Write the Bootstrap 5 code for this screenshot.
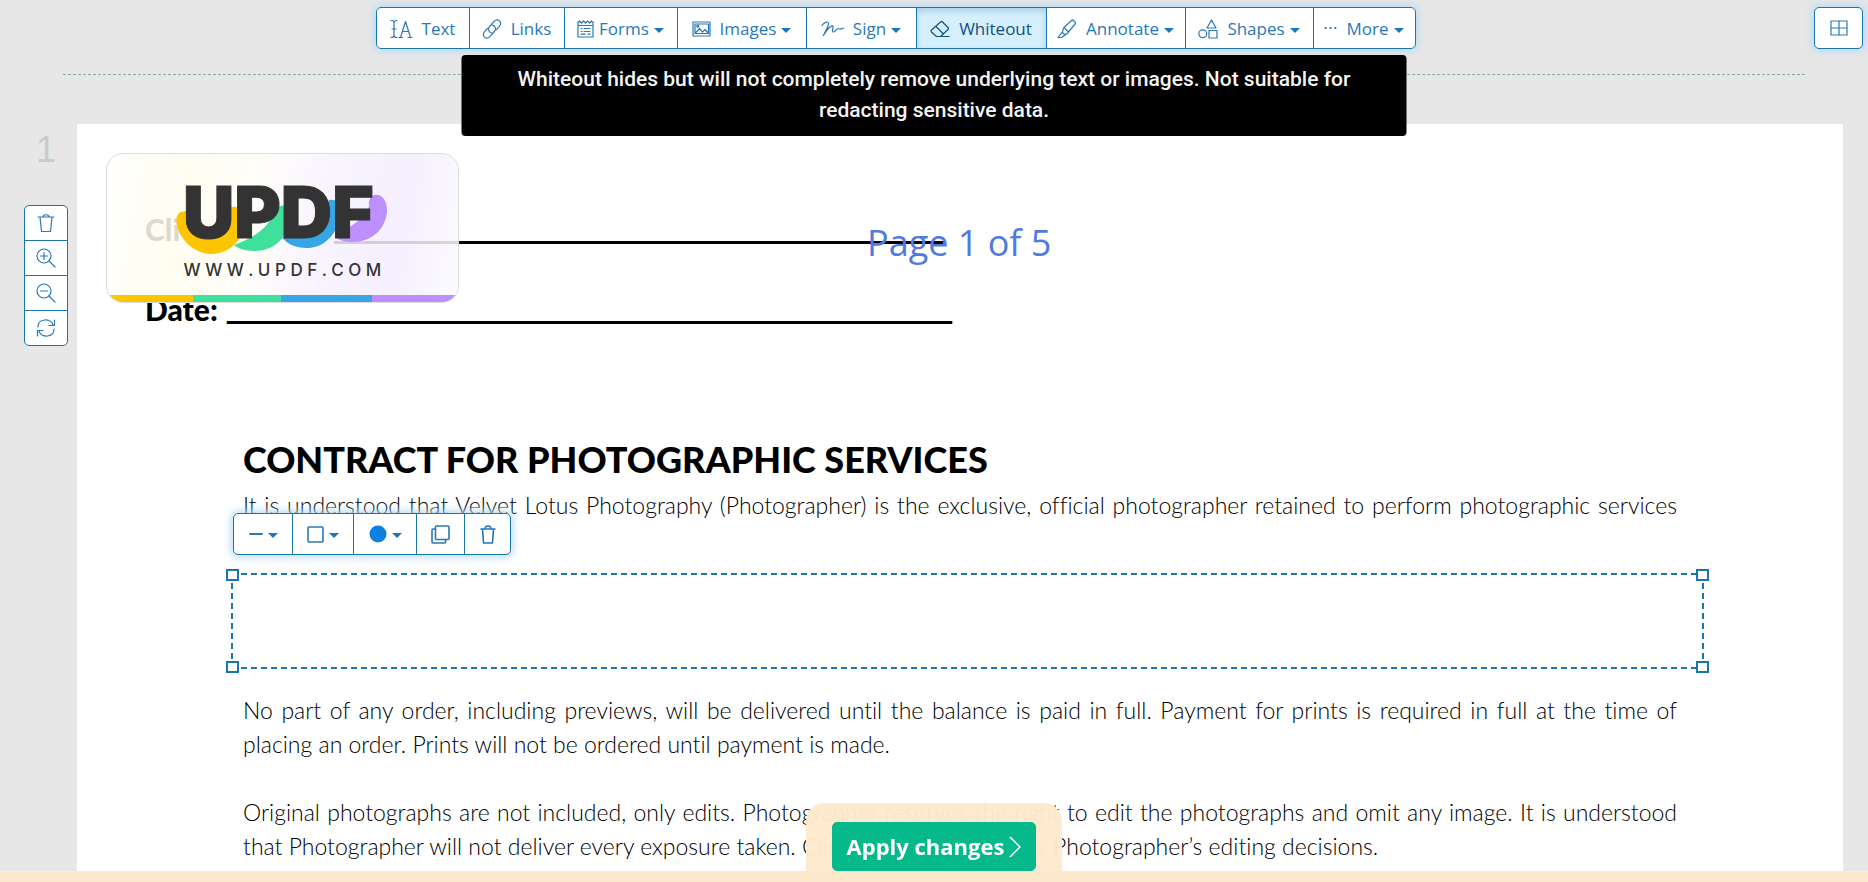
<!DOCTYPE html>
<html lang="en">
<head>
<meta charset="utf-8">
<meta name="viewport" content="width=device-width, initial-scale=1">
<title>Whiteout – PDF editor</title>
<link href="https://cdn.jsdelivr.net/npm/bootstrap@5.3.0/dist/css/bootstrap.min.css" rel="stylesheet">
<style>
:root { --line: #1a75a8; --tool: #2a78b8; }
body { background: #e7e7e7; font-family: "Open Sans", sans-serif; overflow: hidden; }
.tool-btn {
  --bs-btn-color: var(--tool); --bs-btn-bg: #fff; --bs-btn-border-color: var(--line);
  --bs-btn-hover-color: #14507c; --bs-btn-hover-bg: #dff2fc; --bs-btn-hover-border-color: var(--line);
  --bs-btn-active-color: #14507c; --bs-btn-active-bg: #d5effc; --bs-btn-active-border-color: var(--line);
  --bs-btn-padding-x: 0; --bs-btn-padding-y: 0; --bs-btn-font-size: 17px; --bs-btn-border-radius: 5px;
  display: flex; align-items: center; justify-content: center; gap: 9px; white-space: nowrap;
}
.tool-btn svg { flex: none; fill: none; stroke: currentColor; stroke-width: 1.2; stroke-linejoin: round; stroke-linecap: round; }
.tool-btn.active { box-shadow: inset 0 3px 6px #a9cfe4; }
.caret::after { content: ""; border: 5px solid transparent; border-top-color: #1878bd; border-bottom: 0; margin: 3px 0 0 -4px; }
.tight-icon svg { margin-right: -4px; }
.glow { box-shadow: 0 0 8px 2px #b5daf3; border-radius: 5px; }
.top-area { height: 124px; padding-top: 7px; }
.main-tools { display: grid; grid-template-columns: 94px 95px 113px 129px 110px 130px 139px 128px 102px; height: 42px; }
.main-tools .tool-btn { padding-top: 1px; }
.side-slot { width: 77px; padding-right: 5px; }
.view-btn { width: 49px; height: 42px; }
.insert-line { margin: 25px 63px 0; border-top: 1px dashed #86acb0; }
.tip-box {
  top: 55px; left: 50%; transform: translateX(-50%); width: 945px; padding: 9px 48px 10px;
  background: #000; color: #f4f4f4; border-radius: 4px; font: 500 21px/31px Roboto, sans-serif; z-index: 5;
}
.page-rail { width: 77px; padding: 7px 0 0 15px; }
.page-no { font: 36px/38px "Liberation Sans", sans-serif; color: #cacaca; margin-bottom: 36px; }
.rail-tools .tool-btn { width: 44px; height: 36px; }
.paper { margin-right: 25px; padding-top: 87px; font-family: Lato, sans-serif; color: #000; font-variant-ligatures: none; }
.field-row { padding-left: 68px; font-size: 30px; line-height: 36px; font-weight: 900; height: 36px; white-space: nowrap; }
.field-row + .field-row { margin-top: 44px; }
.blank { font: 700 26px/40px "Liberation Sans", sans-serif; -webkit-text-stroke: 2px #000; }
.contract { padding: 110px 166px 0; font-size: 23px; line-height: 34px; font-weight: 300; color: #000; text-align: justify; }
.contract h1 { font-size: 36px; line-height: 44px; font-weight: 900; margin-bottom: 7px; text-align: left; }
.contract p { margin-bottom: 34px; }
.contract p.one-line { text-align-last: justify; margin-bottom: 51px; }
.stamp {
  left: 29px; top: 29px; width: 353px; height: 150px; border: 1px solid #dcdcdc; border-radius: 17px; overflow: hidden; z-index: 1;
  background: linear-gradient(100deg, rgba(255,255,252,.86), rgba(255,253,238,.86) 22%, rgba(255,254,249,.86) 42%, rgba(248,242,255,.86) 60%, rgba(244,237,255,.86) 82%, rgba(252,250,255,.86));
}
.stamp svg { inset: 0; }
.stamp-name { top: 16px; left: 76px; font: 900 71px/84px Inter, sans-serif; color: #333; -webkit-text-stroke: 1px #333; }
.stamp-url { top: 106px; left: 0; right: 0; font: 500 17px/20px Inter, sans-serif; color: #333; white-space: pre; text-align: center; }
.stamp-bar { height: 7px; bottom: 0; left: 0; right: 0; display: grid; grid-template-columns: 86fr 89fr 92fr 86fr; }
.page-of { top: 91px; left: 790px; font: 36px/56px "Open Sans", sans-serif; color: #4f7be0; }
.patch {
  --dash: repeating-linear-gradient(90deg, var(--line) 0 6px, transparent 6px 10px);
  --vdash: repeating-linear-gradient(180deg, var(--line) 0 6px, transparent 6px 10px);
  height: 96px; margin: 0 -27px 24px -12px;
  background: var(--dash) 0 0/100% 2px no-repeat, var(--dash) 0 100%/100% 2px no-repeat,
    var(--vdash) 0 0/2px 100% no-repeat, var(--vdash) 100% 0/2px 100% no-repeat, #fff;
}
.grip { width: 13px; height: 12px; border: 2px solid var(--line); background: #fff; }
.grip.n { top: -4px; } .grip.s { bottom: -4px; } .grip.w { left: -5px; } .grip.e { right: -5px; }
.patch-tools { top: -60px; left: 2px; display: grid; grid-template-columns: 60px 61px 63px 48px 46px; height: 42px; }
.patch-tools svg { stroke-width: 1.6; }
.dock { background: rgba(254,234,205,.97); border-radius: 18px 18px 0 0; width: 256px; padding: 19px 26px 0; }
.dock-bar { background: #fdeacd; height: 11px; }
.apply-btn {
  --bs-btn-color: #fff; --bs-btn-bg: #05b98a; --bs-btn-border-color: #05b98a; --bs-btn-hover-color: #fff; --bs-btn-hover-bg: #04a67c;
  --bs-btn-padding-x: 0; --bs-btn-padding-y: 0; --bs-btn-font-size: 22px; --bs-btn-font-weight: 700; --bs-btn-border-radius: 5px;
  height: 49px; gap: 5px;
}
</style>
</head>
<body class="vh-100 d-flex flex-column">

<header class="top-area flex-shrink-0 position-relative">
  <div class="d-flex">
    <div class="flex-grow-1 d-flex justify-content-center">
      <div class="btn-group glow main-tools" role="toolbar" aria-label="Editing tools">
        <button type="button" class="btn tool-btn"><svg width="23" height="20" viewBox="0 0 23 20"><path d="M1 1.500c2 0 3 .5 3 2v13c0 1.500-1 2-3 2M7 1.500c-2 0-3 .5-3 2M7 18.500c-2 0-3-.5-3-2M2 10h4M9 18.500h3.500M18 18.500h4M10.500 18.500 15.500 2.500l5 16M12.500 12.500h6"/></svg>Text</button>
        <button type="button" class="btn tool-btn"><svg width="20" height="20" viewBox="0 0 20 20"><path d="M9.500 13.800C6.300 13 5.600 9.700 7.600 7.500l4.600-5.200c1.500-1.700 3.800-1.700 5.300-.4s1.600 3.600.1 5.300L14.500 10.600"/><path d="M10.500 6.200c3.200.8 3.900 4.100 1.900 6.300l-4.600 5.200c-1.500 1.700-3.800 1.700-5.300.4s-1.600-3.600-.1-5.300L5.500 9.400"/></svg>Links</button>
        <button type="button" class="btn tool-btn caret tight-icon"><svg width="17" height="18" viewBox="0 0 17 18"><path d="M1 1.500V17h15V1.500M1 2h1.500M14.500 2H16M2.500 1l2 2 2-2 2 2 2-2 2 2 2-2M1 5.500h15M4 8.500h1M7 8.500h6M4 11.500h1M7 11.500h6M4 14.200h4M11 14.200h2"/></svg>Forms</button>
        <button type="button" class="btn tool-btn caret"><svg width="19" height="16" viewBox="0 0 19 16"><path d="M1 1h17v14H1zM3 12.500l4.500-5 3 3.500L13 8.500l3.500 4zM3 12.500V3h13.500v9.500"/><circle cx="5.800" cy="5.200" r="1"/></svg>Images</button>
        <button type="button" class="btn tool-btn caret"><svg width="23" height="16" viewBox="0 0 23 16"><path d="M1 4.500C3 1.500 7 0 7.500 2.200 7.800 5 4 10.500 2.500 14.500 5.500 9 9.500 4.500 11.500 4.800c2 .4-1.500 5.700.7 6.200 1.800.3 3-3.500 4.800-3.500s.5 2 5.500-.5"/></svg>Sign</button>
        <button type="button" class="btn tool-btn active" aria-pressed="true"><svg width="20" height="18" viewBox="0 0 20 18"><path d="M6.500 16.500 1.500 12q-1-1 0-2L10.500 2q1-1 2 0L18 7.500q1 1 0 2L10.500 16.500zM6 6.500l7.500 7.500M6.500 16.500H19"/></svg>Whiteout</button>
        <button type="button" class="btn tool-btn caret"><svg width="20" height="20" viewBox="0 0 20 20"><path d="M7 8.500 14.500 1.500q1-1 2 0l1.500 1.500q1 1 0 2L11.500 13zM7 8.500c-1.500 1.500-.5 3-1.800 4.700L8 16c1.500-1.500 2.500-1 3.500-3zM5.200 13.200 1 18.500h3.500L8 16"/></svg>Annotate</button>
        <button type="button" class="btn tool-btn caret"><svg width="20" height="20" viewBox="0 0 20 20"><path d="M13.500 1 18 9H9zM11 11.500h8V19h-8z"/><circle cx="4.800" cy="14.800" r="3.900"/></svg>Shapes</button>
        <button type="button" class="btn tool-btn caret"><svg width="13" height="6" viewBox="0 0 13 6"><path d="M1.500 2h.4M6.300 2h.4M11.100 2h.4" stroke-width="2"/></svg>More</button>
      </div>
    </div>
    <div class="side-slot d-flex justify-content-end">
      <button type="button" class="btn tool-btn glow view-btn" aria-label="Page grid"><svg width="18" height="16" viewBox="0 0 18 16"><path d="M1 1h16v14H1zM9 1v14M1 8h16"/></svg></button>
    </div>
  </div>
  <div class="insert-line"></div>
  <div class="tip-box position-absolute text-center" role="tooltip">Whiteout hides but will not completely remove underlying text or images. Not suitable for redacting sensitive data.</div>
</header>

<main class="d-flex flex-grow-1 overflow-hidden">
  <aside class="page-rail flex-shrink-0 d-flex flex-column align-items-center">
    <div class="page-no">1</div>
    <div class="btn-group-vertical rail-tools" role="group" aria-label="Page tools">
      <button type="button" class="btn tool-btn" aria-label="Delete page"><svg width="18" height="20" viewBox="0 0 18 20"><path d="M1 4h16M3 4l1.500 14.500h9L15 4M6 4c0-3 6-3 6 0"/></svg></button>
      <button type="button" class="btn tool-btn" aria-label="Zoom in"><svg width="20" height="20" viewBox="0 0 20 20"><circle cx="8" cy="8" r="7"/><path d="M13 13l6 6M8 4.500v7M4.500 8h7"/></svg></button>
      <button type="button" class="btn tool-btn" aria-label="Zoom out"><svg width="20" height="20" viewBox="0 0 20 20"><circle cx="8" cy="8" r="7"/><path d="M13 13l6 6M4.500 8h7"/></svg></button>
      <button type="button" class="btn tool-btn" aria-label="Rotate page"><svg width="20" height="20" viewBox="0 0 20 20"><path d="M2 9C2 0 15 0 17 7M18.500 2v5.500H13M18 11c0 9-13 9-15 2M1.500 18v-5.500H7"/></svg></button>
    </div>
  </aside>

  <article class="paper bg-white flex-grow-1 position-relative">
    <div class="field-row d-flex"><span style="width:190px">Cli</span><span class="blank">__________________________________________</span></div>
    <div class="field-row d-flex"><span style="width:83px">Date:</span><span class="blank">__________________________________________________</span></div>

    <div class="stamp position-absolute">
      <svg class="position-absolute" width="353" height="149" viewBox="0 0 353 149" aria-hidden="true">
        <path fill="#fdc500" d="M72 59C78 56 88 56 92 66C96 84 118 84 118 62C118 50 134 50 136 60C142 82 124 100 104 100C84 100 66 78 70 62Z"/>
        <path fill="#3fe09b" d="M127 91C146 84 158 76 166 62C168 50 182 48 182 58C184 82 168 97 148 97C138 97 130 94 127 91Z"/>
        <path fill="#38a6e4" d="M175 83C200 84 218 64 222 46C234 44 234 56 232 66C228 84 214 94 200 94C188 94 180 90 175 83Z"/>
        <path fill="#bd8fff" d="M228 82C240 74 258 66 262 52C260 36 281 36 280 58C278 76 264 88 246 88C238 88 230 86 228 82Z"/>
      </svg>
      <div class="stamp-name position-absolute">UPDF</div>
      <div class="stamp-url position-absolute">W W W . U P D F . C O M</div>
      <div class="stamp-bar position-absolute">
        <i style="background:#fdc500"></i><i style="background:#3fe09b"></i><i style="background:#38a6e4"></i><i style="background:#bd8fff"></i>
      </div>
    </div>
    <div class="page-of position-absolute">Page 1 of 5</div>

    <section class="contract">
      <h1>CONTRACT FOR PHOTOGRAPHIC SERVICES</h1>
      <p class="one-line">It is understood that Velvet Lotus Photography (Photographer) is the exclusive, official photographer retained to perform photographic services</p>
      <div class="patch position-relative">
        <div class="patch-tools btn-group glow position-absolute" role="toolbar" aria-label="Whiteout options">
          <button type="button" class="btn tool-btn caret" aria-label="Line width"><svg width="14" height="4" viewBox="0 0 14 4"><path d="M1 2h12" stroke-width="2"/></svg></button>
          <button type="button" class="btn tool-btn caret" aria-label="Border colour"><svg width="17" height="17" viewBox="0 0 17 17"><rect x="1" y="1" width="15" height="15" rx="1"/></svg></button>
          <button type="button" class="btn tool-btn caret" aria-label="Fill colour"><svg width="18" height="18" viewBox="0 0 18 18"><circle cx="9" cy="9" r="8.500" fill="#0a80e0" stroke="none"/></svg></button>
          <button type="button" class="btn tool-btn" aria-label="Duplicate"><svg width="19" height="19" viewBox="0 0 19 19"><rect x="4.500" y="1" width="13.500" height="13.500" rx="1"/><path d="M4.500 4H2q-1 0-1 1v12q0 1 1 1h11.500q1 0 1-1v-2.500"/></svg></button>
          <button type="button" class="btn tool-btn" aria-label="Delete"><svg width="16" height="19" viewBox="0 0 16 19"><path d="M1 4h14M2.500 4l1 14h9l1-14M5 4c0-4 6-4 6 0"/></svg></button>
        </div>
        <span class="grip n w position-absolute"></span><span class="grip n e position-absolute"></span>
        <span class="grip s w position-absolute"></span><span class="grip s e position-absolute"></span>
      </div>
      <p>No part of any order, including previews, will be delivered until the balance is paid in full. Payment for prints is required in full at the time of placing an order. Prints will not be ordered until payment is made.</p>
      <p>Original photographs are not included, only edits. Photographer reserves the right to edit the photographs and omit any image. It is understood that Photographer will not deliver every exposure taken. Client agrees to abide by Photographer’s editing decisions.</p>
    </section>
  </article>
</main>

<footer class="fixed-bottom">
  <div class="dock mx-auto">
    <button type="button" class="btn apply-btn w-100 d-flex align-items-center justify-content-center">Apply changes<svg width="12" height="22" viewBox="0 0 12 22" fill="none" stroke="#fff" stroke-width="1.500"><path d="M1 1l10 10L1 21"/></svg></button>
  </div>
  <div class="dock-bar"></div>
</footer>

<script src="https://cdn.jsdelivr.net/npm/bootstrap@5.3.0/dist/js/bootstrap.bundle.min.js"></script>
</body>
</html>
